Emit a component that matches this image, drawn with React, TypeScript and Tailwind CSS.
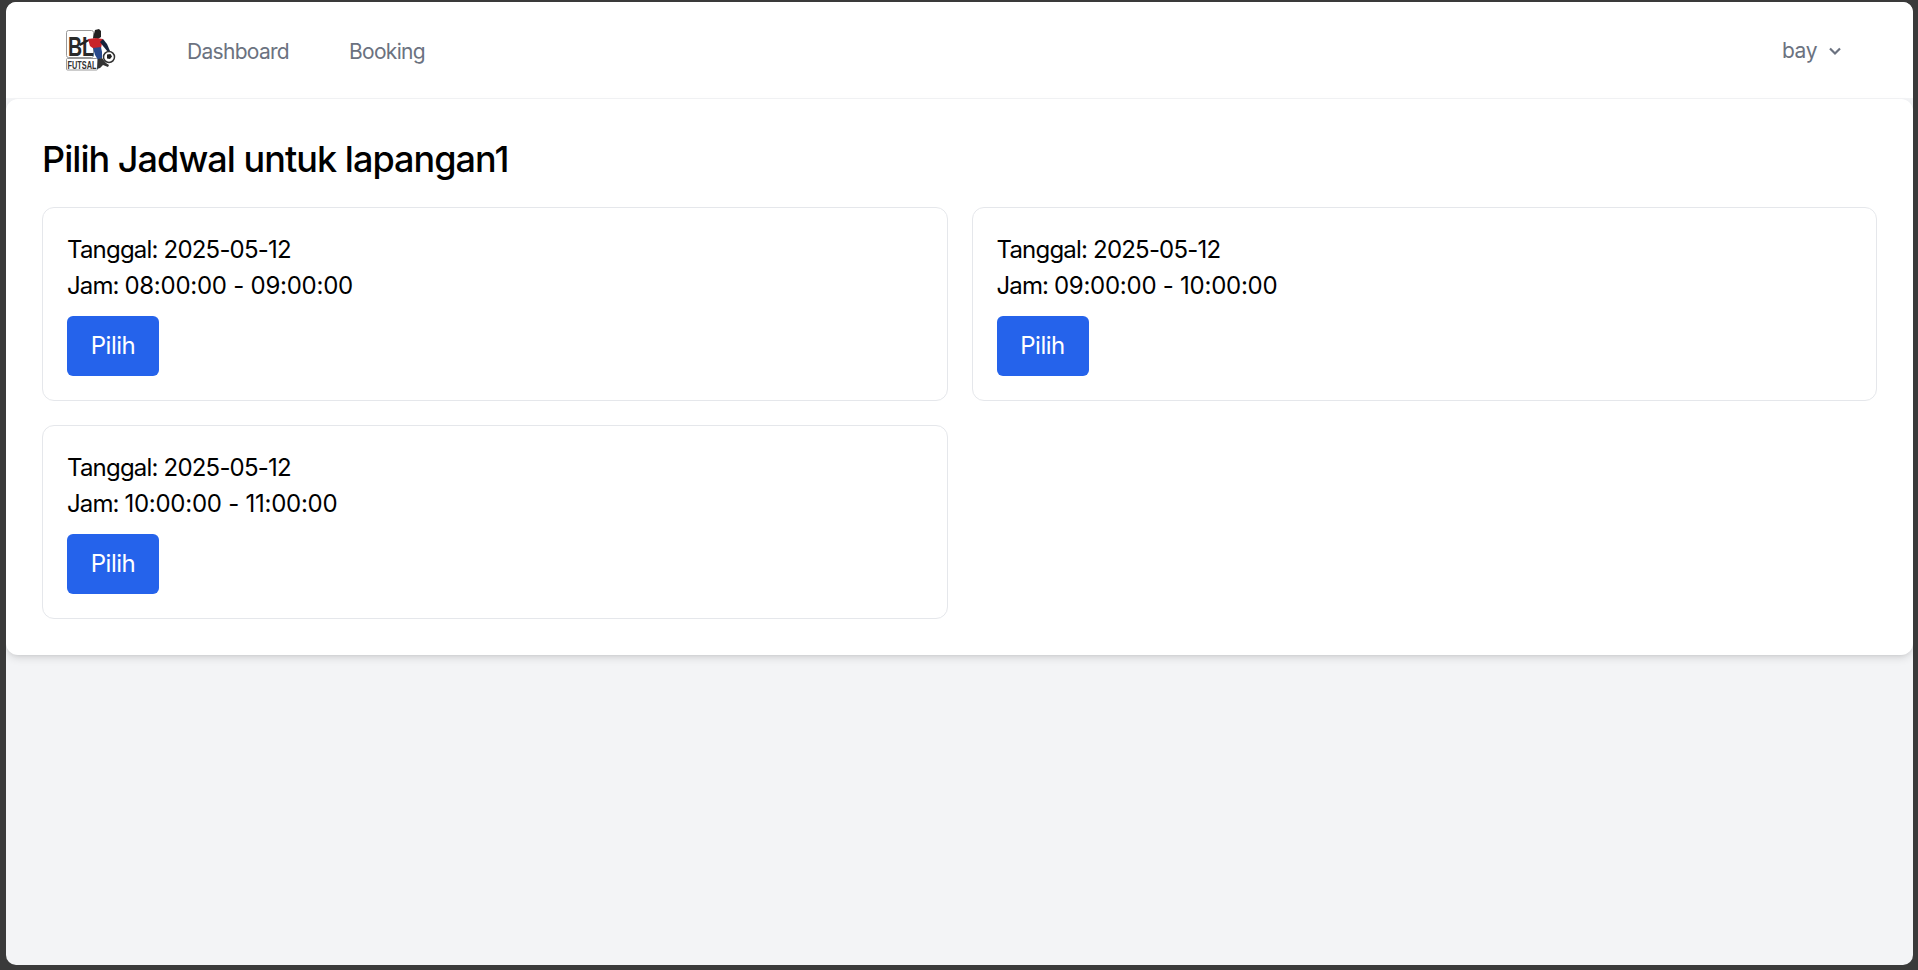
const font = "[font-family:Inter,'Liberation_Sans',sans-serif]";

function Logo() {
  return (
    <svg width="50" height="42" viewBox="0 0 50 42" className="block">
      <rect x="0.5" y="1.5" width="27" height="27" rx="2" fill="#fff" stroke="#999" strokeWidth="1" />
      <text x="2" y="27" fontFamily="'Liberation Sans',sans-serif" fontWeight="700" fontSize="28" fill="#2a2a2a" textLength="26" lengthAdjust="spacingAndGlyphs">BL</text>
      <rect x="0.5" y="29.5" width="31" height="11.5" rx="1" fill="#fff" stroke="#999" strokeWidth="1" />
      <text x="1.5" y="39.5" fontFamily="'Liberation Sans',sans-serif" fontWeight="700" fontSize="11" fill="#333" textLength="29" lengthAdjust="spacingAndGlyphs">FUTSAL</text>
      <path d="M27 9l2-8 4-1 2 2 0 6-3 2z" fill="#222" />
      <path d="M13 15l7-4 4-1-1 2-5 3-4 2z" fill="#222" />
      <path d="M22 10l8-1 7 1-2 9-7 1-4-3z" fill="#c8242b" />
      <path d="M37 10l4 5 3 7-2 1-5-6-3-4z" fill="#16233d" />
      <path d="M27 19l8-1 1 5 0 6-4 2-3-5z" fill="#2a4a8c" />
      <path d="M32 30l4-1 4 5 3 2-1 2-5-2-3 3-3 1z" fill="#333" />
      <circle cx="43" cy="28" r="5.5" fill="#fff" stroke="#333" strokeWidth="1.5" />
      <path d="M41 25.5l3.5-0.5 1.5 2.5-2 2.5-3-0.5z" fill="#222" />
    </svg>
  );
}

function Slot({ time }: { time: string }) {
  return (
    <div className="h-[194px] rounded-[12px] border border-[#e5e7eb] bg-white p-[24px] text-[24px] leading-[36px] text-black">
      <p className="tracking-[-0.8px]">Tanggal: 2025-05-12</p>
      <p>
        <span className="tracking-[-0.9px]">Jam: </span>
        <span className="tracking-[-0.25px]">{time}</span>
      </p>
      <button className="mt-[12px] block h-[60px] w-[92px] rounded-[6px] bg-[#2563eb] text-center text-[24px] tracking-[-0.45px] text-white">
        Pilih
      </button>
    </div>
  );
}

export default function App() {
  return (
    <div className={`h-[970px] w-[1918px] overflow-hidden bg-[#3a3a3a] pb-[5px] pl-[6px] pr-[5px] pt-[2px] ${font}`}>
      <div className="h-full overflow-hidden rounded-[10px] bg-[#f3f4f6]">
        <nav className="flex h-[97px] items-center border-b border-[#f3f4f6] bg-white pl-[60px] pr-[71px]">
          <Logo />
          <div className="ml-[71px] flex gap-[60px] pt-[4px] text-[21px] tracking-[-0.7px] text-[#6b7280]">
            <a>Dashboard</a>
            <a>Booking</a>
          </div>
          <div className="ml-auto flex items-center gap-[11px] pt-[1px] text-[21px] tracking-[-0.45px] text-[#6b7280]">
            <span>bay</span>
            <svg width="14" height="14" viewBox="0 0 14 14" fill="none" stroke="#6b7280" strokeWidth="2.2">
              <path d="M2 4.5l5 5 5-5" />
            </svg>
          </div>
        </nav>
        <main className="rounded-[12px] bg-white p-[36px] shadow-[0_4px_8px_-1px_rgba(0,0,0,0.12),0_2px_4px_-2px_rgba(0,0,0,0.1)]">
          <h1 className="mb-[24px] text-[36px] font-[550] leading-[48px] tracking-[-0.95px] text-black">Pilih Jadwal untuk lapangan1</h1>
          <div className="grid grid-cols-2 gap-[24px]">
            <Slot time="08:00:00 - 09:00:00" />
            <Slot time="09:00:00 - 10:00:00" />
            <Slot time="10:00:00 - 11:00:00" />
          </div>
        </main>
      </div>
    </div>
  );
}
